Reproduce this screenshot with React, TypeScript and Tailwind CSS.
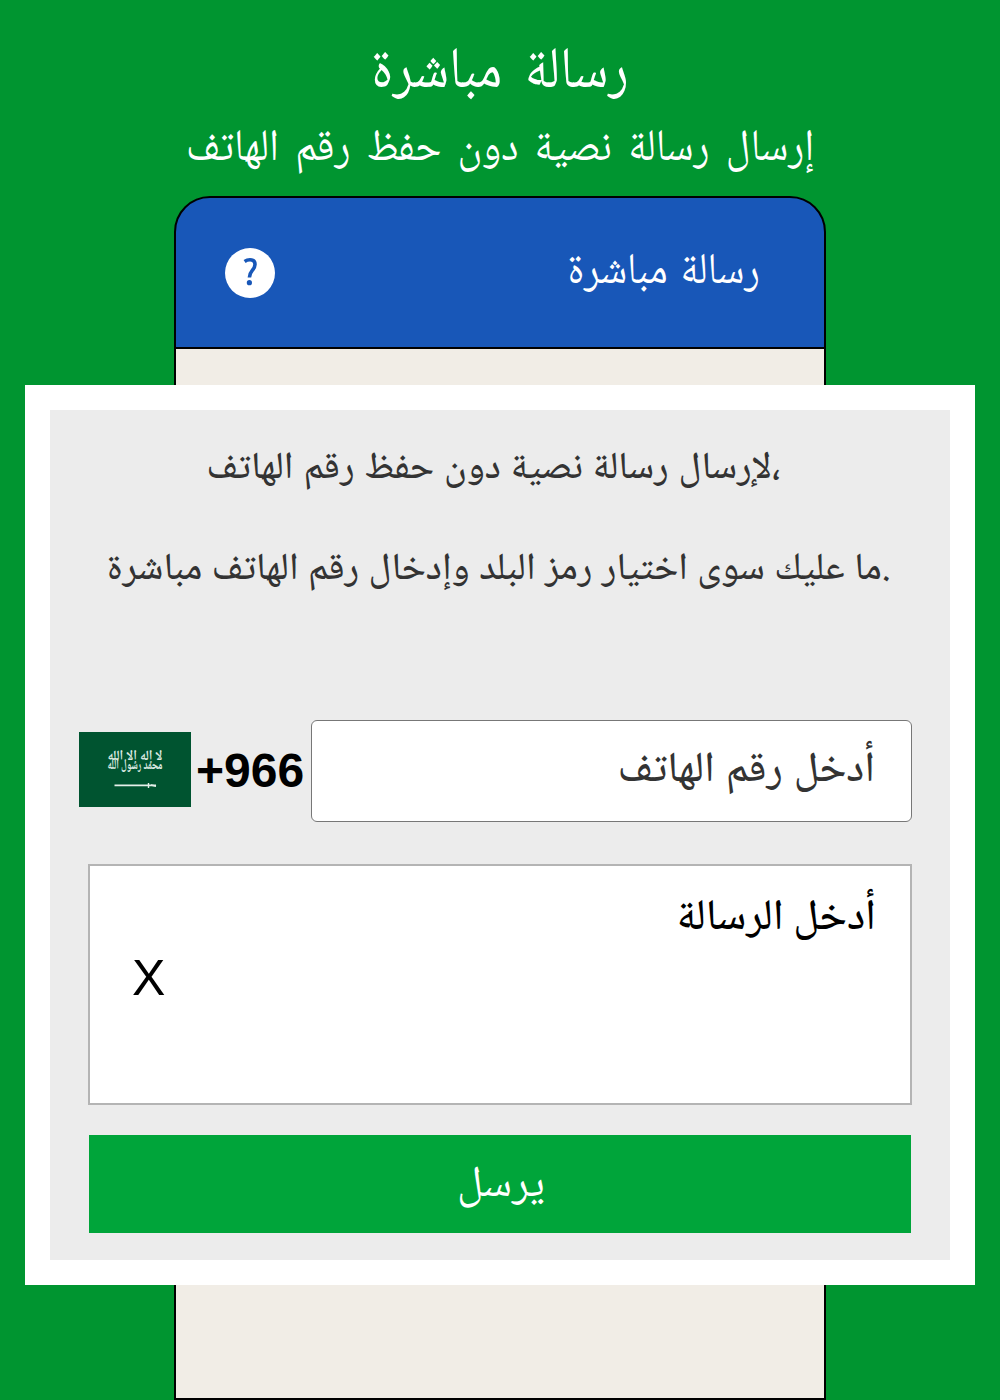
function HelpIcon() {
  return (
    <svg className="h-[50px] w-[50px]" viewBox="0 0 50 50" fill="none">
      <circle cx="25" cy="25" r="25" fill="#fff" />
      <path
        d="M19.6 13.4C21.5 12.1 23.2 11.8 25 11.8C28.2 11.8 30 13.6 30 16.6C30 22 24.4 22.6 24.4 29.5"
        stroke="#1857b8"
        strokeWidth="3.6"
      />
      <circle cx="24.4" cy="34.7" r="2.6" fill="#1857b8" />
    </svg>
  );
}

function SaudiFlag() {
  return (
    <svg className="mb-1 h-[75px] w-28 shrink-0" viewBox="0 0 112 75">
      <rect width="112" height="75" fill="#005430" />
      <g
        fill="#dbe9e1"
        textAnchor="middle"
        className="font-['Noto_Naskh_Arabic',serif] text-[14px] font-bold"
      >
        <text x="56" y="28" textLength="55" lengthAdjust="spacingAndGlyphs">
          لا إله إلا الله
        </text>
        <text x="56" y="36.5" textLength="55" lengthAdjust="spacingAndGlyphs">
          محمد رسول الله
        </text>
      </g>
      <path d="M35.5 53.3H77" stroke="#e6f0ea" strokeWidth="1.7" />
      <path d="M69.5 51v5M72 53l5 1.2" stroke="#e6f0ea" strokeWidth="1.4" />
    </svg>
  );
}

function PhoneHeader() {
  return (
    <div className="flex h-[151px] w-full shrink-0 items-center justify-between border-b-2 border-black pr-16 pl-[49px]">
      <HelpIcon />
      <span className="mt-[3px] scale-y-108 text-[40.5px] leading-[60px] [word-spacing:4px] text-white">
        رسالة مباشرة
      </span>
    </div>
  );
}

function MessageForm() {
  return (
    <div className="flex h-[900px] w-[950px] shrink-0 flex-col border-[25px] border-white bg-[#ececec] text-[#333]">
      <div className="flex h-[310px] flex-col items-center text-[38.1px] leading-[60px] font-medium whitespace-nowrap">
        <p className="mt-[30px] mr-[13px] [word-spacing:1.5px]">لإرسال رسالة نصية دون حفظ رقم الهاتف،</p>
        <p className="mt-[41px] mr-[3px] [word-spacing:1px]">
          ما عليك سوى اختيار رمز البلد وإدخال رقم الهاتف مباشرة.
        </p>
      </div>

      <div className="flex h-[102px] items-center pl-[29px]">
        <SaudiFlag />
        <span className="w-[120px] pl-[5px] font-['Liberation_Sans',sans-serif] text-[48px] font-bold text-black">
          +966
        </span>
        <div
          dir="rtl"
          className="flex h-[102px] w-[601px] items-center rounded-md border border-[#777] bg-white pt-0.5 pr-9 text-[42.5px] leading-[60px] font-medium [word-spacing:1.5px]"
        >
          أدخل رقم الهاتف
        </div>
      </div>

      <div className="mt-[42px] ml-[38px] h-[241px] w-[824px] border-2 border-[#b4b4b4] bg-white pt-6 pr-[34px] pl-9 text-black">
        <p dir="rtl" className="text-[43.2px] leading-[60px] font-medium">
          أدخل الرسالة
        </p>
        <span className="-mt-0.5 block pl-[6px] font-['Liberation_Sans',sans-serif] text-[50px] leading-[60px]">
          X
        </span>
      </div>

      <button className="mt-[30px] ml-[39px] h-[98px] w-[822px] bg-[#00a53a] pt-1.5 pl-0.5 text-[44px] leading-[60px] text-white">
        يرسل
      </button>
    </div>
  );
}

export default function App() {
  return (
    <div className="flex h-[1400px] w-[1000px] flex-col items-center overflow-hidden bg-[#009530] font-['Noto_Naskh_Arabic',sans-serif]">
      <h1 className="mt-[35px] scale-y-110 text-[53px] leading-[80px] [word-spacing:11px] text-white">
        رسالة مباشرة
      </h1>
      <h2 className="mt-[5px] scale-y-108 text-[41.5px] leading-[60px] [word-spacing:7px] text-white">
        إرسال رسالة نصية دون حفظ رقم الهاتف
      </h2>

      <div className="mt-4 flex h-[1204px] w-[652px] shrink-0 flex-col rounded-t-[36px] border-2 border-black bg-[#1857b8]">
        <PhoneHeader />
        <div className="flex flex-1 flex-col items-center bg-[#f1ede6] pt-9">
          <MessageForm />
        </div>
      </div>
    </div>
  );
}
